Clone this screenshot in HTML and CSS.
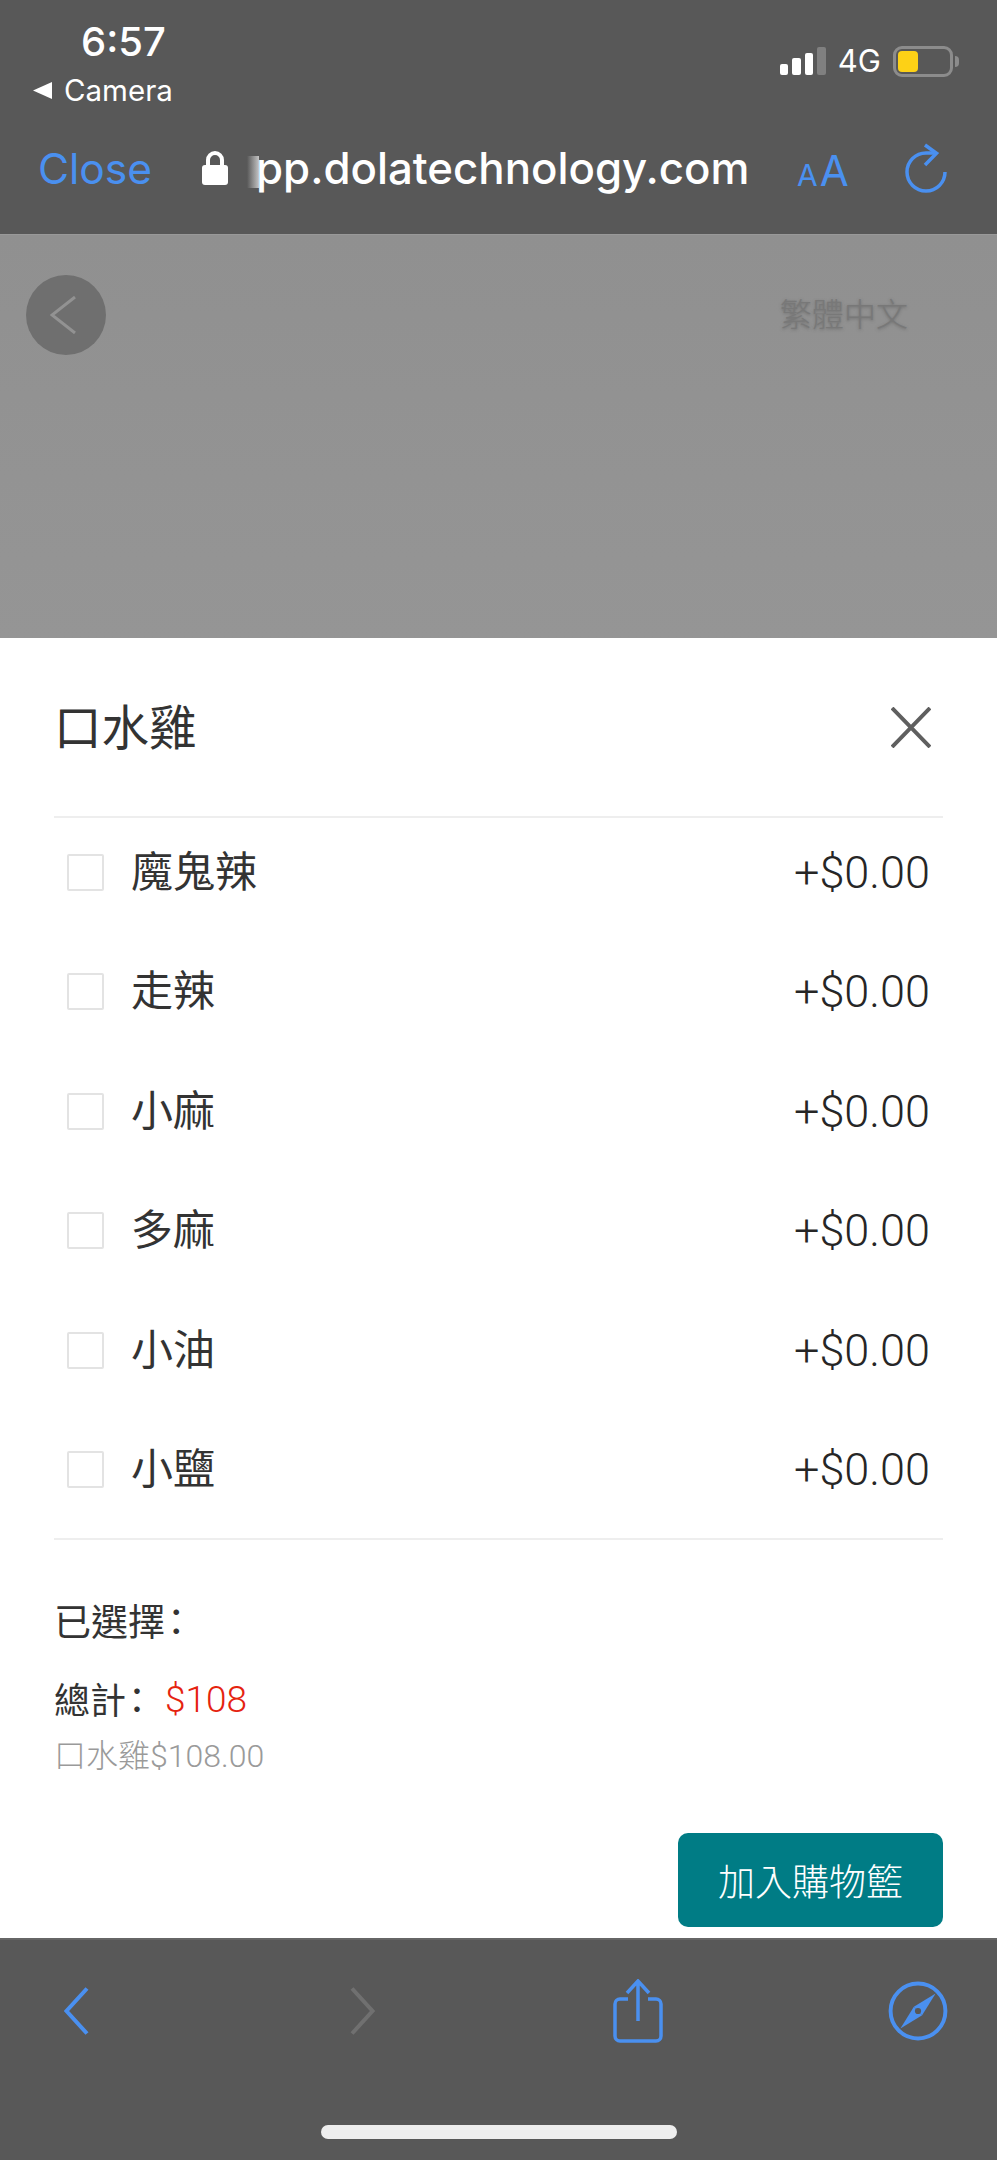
FILE: index.html
```html
<!DOCTYPE html>
<html lang="zh-Hant">
<head>
<meta charset="utf-8">
<title>口水雞</title>
<link rel="stylesheet" href="styles.css">
</head>
<body>
<div class="app">
  <header class="topbar">
    <div class="status">
      <div class="status-left">
        <div class="time">6:57</div>
        <div class="camera"><svg class="tri" viewBox="0 0 19 17"><path d="M19 0V17L0 8.500Z"/></svg><span>Camera</span></div>
      </div>
      <div class="status-right">
        <div class="signal"><i class="b1"></i><i class="b2"></i><i class="b3"></i><i class="b4"></i></div>
        <span class="net">4G</span>
        <div class="battery"><div class="battery-fill"></div></div>
        <div class="battery-nub"></div>
      </div>
    </div>
    <div class="nav">
      <span class="close">Close</span>
      <svg class="lock" viewBox="0 0 26 34"><path class="lock-body" d="M3 14H23A3 3 0 0 1 26 17V31A3 3 0 0 1 23 34H3A3 3 0 0 1 0 31V17A3 3 0 0 1 3 14Z"/><path class="lock-arc" d="M6 15V9A7 7 0 0 1 20 9V15"/></svg>
      <span class="url"><i class="url-fade"></i>pp.dolatechnology.com</span>
      <span class="aa"><span class="aa-s">A</span><span class="aa-l">A</span></span>
      <svg class="reload" viewBox="0 0 40 48"><path d="M30 9H20A19 19 0 1 0 39 28"/><path d="M19 1L30.500 9.300L19 21"/></svg>
    </div>
  </header>

  <section class="backdrop">
    <div class="back-circle"><svg viewBox="0 0 26 38"><path d="M25 1L2 19L25 37"/></svg></div>
    <span class="lang">繁體中文</span>
  </section>

  <main class="sheet">
    <div class="sheet-head">
      <h1 class="title">口水雞</h1>
      <svg class="x" viewBox="0 0 40 41"><path d="M1 1L39 40M39 1L1 40"/></svg>
    </div>
    <ul class="options">
      <li class="option"><span class="box"></span><span class="name">魔鬼辣</span><span class="price">+$0.00</span></li>
      <li class="option"><span class="box"></span><span class="name">走辣</span><span class="price">+$0.00</span></li>
      <li class="option"><span class="box"></span><span class="name">小麻</span><span class="price">+$0.00</span></li>
      <li class="option"><span class="box"></span><span class="name">多麻</span><span class="price">+$0.00</span></li>
      <li class="option"><span class="box"></span><span class="name">小油</span><span class="price">+$0.00</span></li>
      <li class="option"><span class="box"></span><span class="name">小鹽</span><span class="price">+$0.00</span></li>
    </ul>
    <div class="summary">
      <div class="selected">已選擇<span class="colon">：</span></div>
      <div class="total">總計<span class="colon">：</span><span class="amount">$108</span></div>
      <div class="detail">口水雞$108.00</div>
    </div>
    <div class="actions"><button class="add">加入購物籃</button></div>
  </main>

  <footer class="toolbar">
    <div class="tools">
      <svg class="chev" viewBox="0 0 25 48"><path d="M23 1.500L2.500 24L23 46.500"/></svg>
      <svg class="chev off" viewBox="0 0 25 48"><path d="M2 1.500L22.500 24L2 46.500"/></svg>
      <svg class="share" viewBox="0 0 50 64"><path d="M15 20H7A5 5 0 0 0 2 25V57A5 5 0 0 0 7 62H43A5 5 0 0 0 48 57V25A5 5 0 0 0 43 20H35"/><path d="M25 42V2M14 14L25 2L36 14"/></svg>
      <svg class="compass" viewBox="0 0 58 58"><circle cx="29" cy="29" r="26.500"/><path class="needle" d="M46 12L33 33L25 25Z"/><path class="needle" d="M12 46L25 25L33 33Z"/><circle class="pin" cx="29" cy="29" r="3"/></svg>
    </div>
    <div class="home"></div>
  </footer>
</div>
</body>
</html>
```
FILE: styles.css
```css
* { box-sizing: border-box; }
html, body { margin: 0; padding: 0; }
body { background: #585858; font-family: Inter, "Liberation Sans", "Noto Sans CJK TC", sans-serif; }
.app { width: 997px; height: 2160px; display: flex; flex-direction: column; overflow: hidden; }

.topbar { height: 234px; background: #585858; flex: none; color: #fff; }
.status { height: 128px; display: flex; justify-content: space-between; }
.status-left { padding: 17px 0 0 33px; }
.time { font-size: 40px; font-weight: 500; line-height: 50px; padding-left: 48px; }
.camera { display: flex; align-items: center; gap: 12px; font-size: 29.500px; line-height: 36px; margin-top: 5px; }
.tri { width: 19px; height: 17px; fill: #fff; flex: none; }
.status-right { display: flex; align-items: flex-start; padding: 46px 38px 0 0; }
.signal { display: flex; align-items: flex-end; gap: 4px; height: 29px; }
.signal i { display: block; width: 8.500px; background: #fff; border-radius: 2px; }
.b1 { height: 11px; }
.b2 { height: 17px; }
.b3 { height: 22px; }
.signal .b4 { height: 28px; background: #808080; }
.net { font-size: 31px; line-height: 30px; margin-left: 12px; font-weight: 400; }
.battery { width: 60px; height: 31px; margin-left: 12px; border: 3px solid #8c8c8c; border-radius: 9px; padding: 2px; }
.battery-fill { width: 20px; height: 21px; background: #fdd116; border-radius: 4px; }
.battery-nub { width: 4px; height: 11px; margin: 10px 0 0 2px; background: #8c8c8c; border-radius: 0 4px 4px 0; }

.nav { display: flex; align-items: center; height: 64px; margin-top: 8px; padding-left: 38px; }
.close { font-size: 42.500px; color: #4a90f0; width: 164px; }
.lock { width: 26px; height: 34px; flex: none; }
.lock-body { fill: #fff; }
.lock-arc { fill: none; stroke: #fff; stroke-width: 4; }
.url { font-size: 43.800px; font-weight: 500; margin-left: 19px; width: 550px; flex: none; white-space: nowrap; }
.url-fade { display: inline-block; width: 12px; height: 32px; margin-right: -3px; background: linear-gradient(90deg, #585858, #c4c4c4); vertical-align: -4px; }
.aa { color: #4a90f0; display: inline-flex; align-items: baseline; gap: 2px; width: 109px; flex: none; margin-top: 4px; }
.aa-s { font-size: 30px; }
.aa-l { font-size: 42px; }
.reload { width: 40px; height: 48px; fill: none; stroke: #4a90f0; stroke-width: 3.500; flex: none; overflow: visible; }

.backdrop { height: 404px; flex: none; background: linear-gradient(180deg, #909090 0%, #959595 100%); display: flex; justify-content: space-between; align-items: flex-start; padding: 40px 89px 0 26px; border-top: 1px solid #999; }
.back-circle { width: 80px; height: 80px; border-radius: 50%; background: #6f6f6f; display: flex; align-items: center; justify-content: center; padding-right: 6px; }
.back-circle svg { width: 26px; height: 38px; fill: none; stroke: #929292; stroke-width: 3; }
.lang { font-size: 32px; line-height: 40px; margin-top: 17px; color: #787878; text-shadow: 0 1px 3px rgba(80, 80, 80, 0.5); font-family: "Noto Sans CJK TC", sans-serif; font-weight: 300; }

.sheet { flex: 1; background: #fff; padding: 0 54px; display: flex; flex-direction: column; font-family: "Noto Sans CJK TC", sans-serif; color: #333; font-weight: 400; }
.sheet-head { height: 180px; border-bottom: 2px solid #eee; display: flex; justify-content: space-between; align-items: center; padding: 0 12px 0 0; flex: none; }
.title { margin: 0 0 4px; font-size: 47.500px; font-weight: 400; line-height: 64px; }
.x { width: 40px; height: 41px; fill: none; stroke: #5f5f5f; stroke-width: 4; }
.options { list-style: none; margin: 0; padding: 0 13px 0 13px; height: 722px; border-bottom: 2px solid #eee; flex: none; }
.option { height: 119.500px; padding-bottom: 11px; display: flex; align-items: center; }
.box { width: 37px; height: 37px; border: 2px solid #e3e3e3; border-radius: 2px; flex: none; }
.name { font-size: 42px; margin-left: 27px; padding-bottom: 8px; flex: 1; }
.price { font-family: Roboto, "Liberation Sans", sans-serif; font-weight: 300; font-size: 45px; color: #262626; }
.summary { padding-top: 55px; flex: none; }
.selected { font-size: 37px; line-height: 50px; }
.total { font-size: 36px; line-height: 50px; margin-top: 25px; display: flex; align-items: center; }
.colon { display: inline-block; width: 29px; padding-left: 2px; font-feature-settings: "palt"; }
.amount { color: #e5230f; font-size: 37px; font-family: Roboto, "Liberation Sans", sans-serif; font-weight: 300; margin: 5px 0 0 10px; }
.detail { font-family: Roboto, "Noto Sans CJK TC", sans-serif; font-weight: 300; font-size: 32px; line-height: 44px; color: #9a9a9a; margin-top: 8.500px; }
.actions { display: flex; justify-content: flex-end; margin-top: 55px; }
.add { width: 265px; height: 94px; background: #007c85; color: #fff; border: 0; border-radius: 10px; font-size: 37px; font-family: "Noto Sans CJK TC", sans-serif; font-weight: 300; padding: 0; }

.toolbar { height: 222px; flex: none; background: #585858; border-top: 2px solid #666; }
.tools { display: flex; align-items: center; height: 120px; padding: 21px 49px 0 64px; }
.chev { width: 25px; height: 48px; fill: none; stroke: #4a90f0; stroke-width: 4; flex: none; }
.chev.off { stroke: #707070; margin-left: 261px; }
.share { width: 50px; height: 64px; fill: none; stroke: #4a90f0; stroke-width: 3.500; flex: none; margin-left: 238px; }
.compass { width: 60px; height: 60px; fill: none; stroke: #4a90f0; stroke-width: 3.800; flex: none; margin-left: 225px; }
.needle { fill: #4a90f0; stroke: none; }
.pin { fill: #585858; stroke: none; }
.home { width: 356px; height: 14px; background: #eee; border-radius: 7px; margin: 65px 0 0 321px; }
```
